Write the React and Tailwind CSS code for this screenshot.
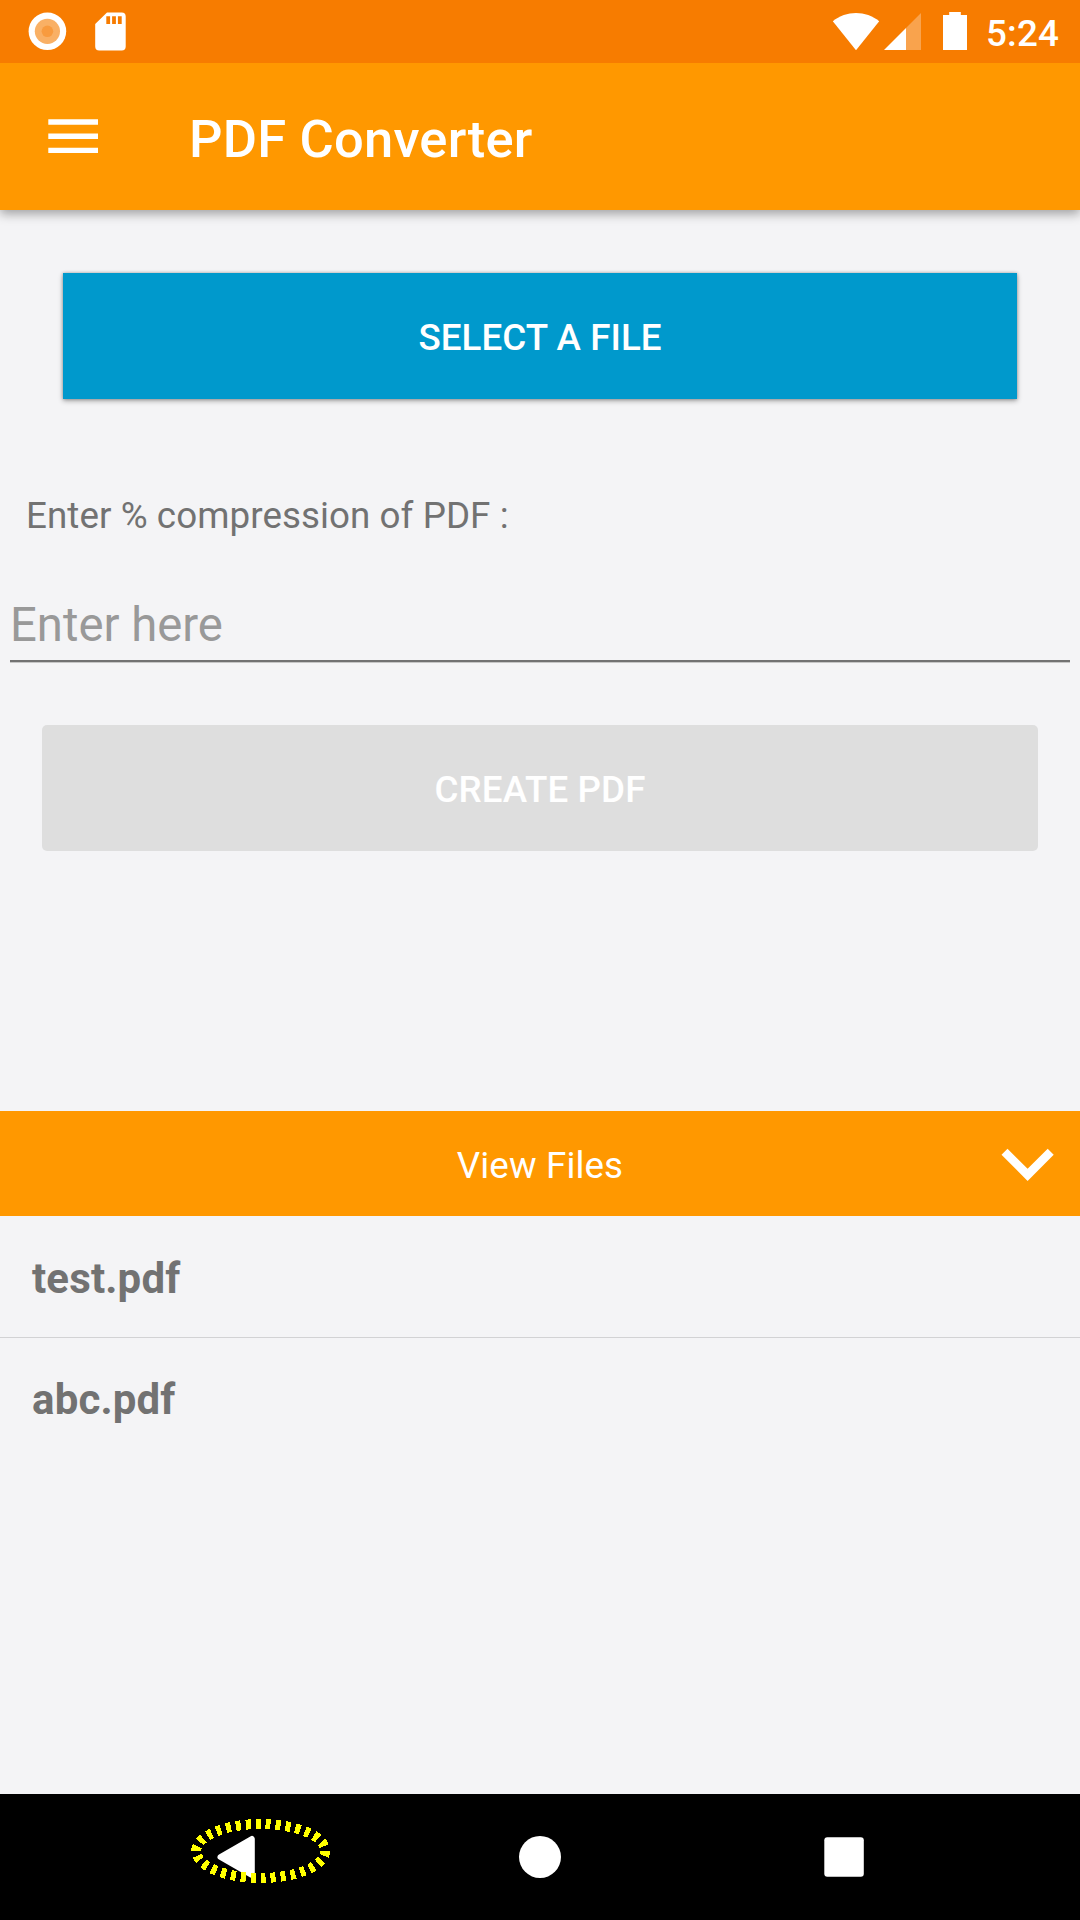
function StatusBar() {
  return (
    <div className="relative z-10 h-[63px] bg-[#f77c00] flex items-start">
      <svg className="w-[160px] h-[63px]" viewBox="0 0 160 63">
        <circle cx="47.4" cy="31.3" r="18.8" fill="#fff" />
        <circle cx="47.4" cy="31.3" r="12.6" fill="#f9b065" />
        <circle cx="47.4" cy="31.3" r="5.8" fill="#f89b3f" />
        <path
          fill="#fff"
          fillRule="evenodd"
          d="M107 12.500H121.700a4 4 0 0 1 4 4V46.500a4 4 0 0 1-4 4H99.200a4 4 0 0 1-4-4V24ZM106.300 16.200V24H110.100V16.200ZM112.100 16.200V24H115.900V16.200ZM117.900 16.200V24H121.700V16.200Z"
        />
      </svg>
      <div className="ml-auto flex h-[63px] items-start">
        <svg className="w-[160px] h-[63px]" viewBox="820 0 160 63">
          <path fill="#fff" d="M832.800 21.300C846 10.200 866 10.200 879.200 21.300L856 50.200Z" />
          <path fill="#fff" fillOpacity="0.3" d="M906 28L921 13V50H906Z" />
          <path fill="#fff" d="M884 50L906 28V50Z" />
          <path fill="#fff" d="M949.200 12h11.600v3H967v35H943V15h6.200Z" />
        </svg>
        <span className="w-[100px] pl-[6px] pt-[12px] text-[36.75px] leading-[43px] font-medium tracking-[0.15px] text-white">
          5:24
        </span>
      </div>
    </div>
  );
}

function AppBar() {
  return (
    <header className="relative h-[147px] bg-[#ff9800] flex items-center shadow-[0_4px_10px_rgba(0,0,0,0.34)]">
      <svg className="ml-[48px] w-[50px] h-[36px] mt-[-2px]" viewBox="0 0 50 36" fill="#fff">
        <path d="M0.300 1.300H50V6.700H0.300ZM0.300 15.500H50V20.900H0.300ZM0.300 29.700H50V35.100H0.300Z" />
      </svg>
      <h1 className="ml-[91px] pt-[5px] text-[52.5px] leading-[62px] font-medium tracking-[0.2px] text-white">
        PDF Converter
      </h1>
    </header>
  );
}

function FileList({ files }) {
  return (
    <ul className="text-[42px] leading-[50px] font-bold tracking-[0.15px] text-[#727272]">
      {files.map((name, i) => (
        <li
          key={name}
          className={
            i === 0
              ? "h-[121px] pl-[32px] pt-[38px]"
              : "h-[121px] pl-[32px] pt-[37px] border-t border-[#d2d2d4]"
          }
        >
          {name}
        </li>
      ))}
    </ul>
  );
}

function NavBar() {
  return (
    <nav className="mt-auto h-[126px] bg-black">
      <svg className="w-[1080px] h-[126px]" viewBox="0 1794 1080 126">
        <path fill="#fff" stroke="#fff" strokeWidth="6" strokeLinejoin="round" d="M251.800 1839V1875L220.500 1857Z" />
        <ellipse
          cx="260.700"
          cy="1851"
          rx="64.500"
          ry="27"
          fill="none"
          stroke="#ffff00"
          strokeWidth="10"
          pathLength="300"
          strokeDasharray="5 5"
          shapeRendering="crispEdges"
        />
        <circle cx="540" cy="1857" r="21" fill="#fff" />
        <rect x="824.300" y="1837.200" width="39.500" height="39.500" rx="3" fill="#fff" />
      </svg>
    </nav>
  );
}

export default function App() {
  return (
    <div className="w-[1080px] h-[1920px] overflow-hidden bg-[#f4f4f6] flex flex-col font-['Roboto',sans-serif]">
      <StatusBar />
      <AppBar />
      <main className="flex flex-col">
        <button className="mx-[63px] mt-[63px] h-[126px] pt-[3px] bg-[#0099cc] text-white text-[36.75px] font-medium tracking-[0.05px] shadow-[0_2px_5px_rgba(0,0,0,0.32),0_0_3px_rgba(0,0,0,0.25)]">
          SELECT A FILE
        </button>
        <p className="mt-[95px] pl-[26px] text-[36.75px] leading-[44px] tracking-[0.07px] text-[#727272]">
          Enter % compression of PDF :
        </p>
        <div className="mx-[10px] mt-[57px] h-[67px] border-b-2 border-[#727272] shadow-[0_1px_0_#c6c6c6] text-[47.25px] leading-[60px] text-[#999999]">
          Enter here
        </div>
        <button className="mx-[42px] mt-[63px] h-[126px] pt-[3px] rounded-[5px] bg-[#dedede] text-white text-[36.75px] font-medium tracking-[0.12px]">
          CREATE PDF
        </button>
        <div className="relative mt-[260px] h-[105px] bg-[#ff9800] flex items-center justify-center text-[36.75px] text-white">
          <span className="pt-[5px] tracking-[0.12px]">View Files</span>
          <svg className="absolute right-[26px] top-[37px] w-[53px] h-[34px]" viewBox="1001 1148 53 34">
            <path fill="#fff" d="M1001.500 1154.700L1007.500 1148.700L1027.600 1168.700L1047.700 1148.700L1053.700 1154.700L1027.600 1180.900Z" />
          </svg>
        </div>
        <FileList files={["test.pdf", "abc.pdf"]} />
      </main>
      <NavBar />
    </div>
  );
}
